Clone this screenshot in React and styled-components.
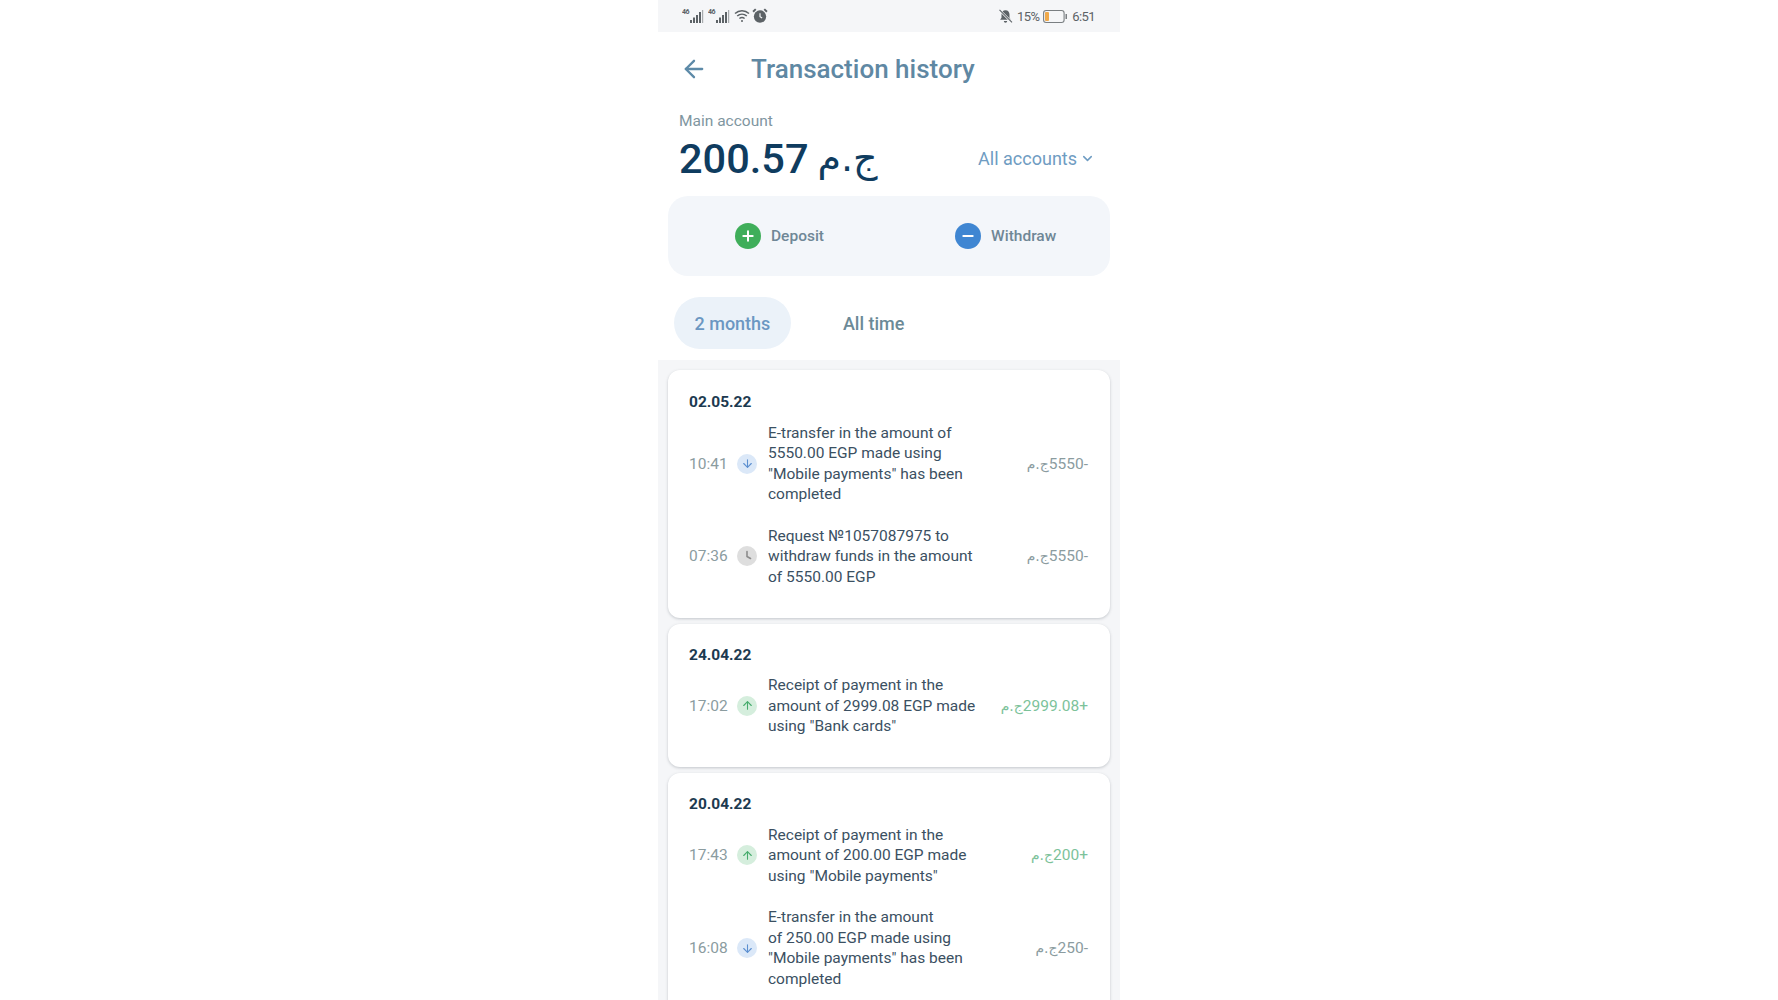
import { ArrowLeft, ArrowDown, ArrowUp, ChevronDown, Plus, Minus } from 'lucide-react'
import styled, { createGlobalStyle } from 'styled-components'

const GlobalStyle = createGlobalStyle`
  html, body {
    margin: 0;
    height: 1000px;
    overflow: hidden;
    background: #fff;
    font-family: Roboto, "Liberation Sans", "DejaVu Sans", sans-serif;
  }
`

const Phone = styled.div`
  width: 462px;
  height: 1000px;
  margin: 0 auto;
  overflow: hidden;
  background: #fff;
`

const StatusBar = styled.div`
  height: 32px;
  padding: 0 25px 0 24px;
  display: flex;
  align-items: center;
  justify-content: space-between;
  background: #f5f6f8;
  color: #5c6266;
  font-size: 13px;
  letter-spacing: -0.6px;
`

const StatusGroup = styled.div`
  display: flex;
  align-items: center;
  gap: ${(p) => p.$gap || 4}px;
`

const Header = styled.header`
  height: 74px;
  padding-left: 22px;
  display: flex;
  align-items: center;
  gap: 43px;
  color: #5d8aa8;
`

const Title = styled.h1`
  margin: 0;
  font-size: 26px;
  font-weight: 500;
  color: #5f88a3;
`

const Label = styled.div`
  margin-top: 5px;
  padding-left: 21px;
  font-size: 15.5px;
  line-height: 20px;
  color: #7f969f;
`

const BalanceRow = styled.div`
  height: 50px;
  margin-top: 2px;
  padding: 0 25px 0 21px;
  display: flex;
  align-items: center;
  justify-content: space-between;
`

const Balance = styled.div`
  display: flex;
  align-items: center;
  gap: 9px;
  font-size: 41.5px;
  font-weight: 500;
  color: #0f3c5f;
`

const Currency = styled.bdi`
  font-family: "DejaVu Sans", sans-serif;
  font-size: ${(p) => p.$size}px;
  font-weight: 400;
`

const AccountPicker = styled.div`
  display: flex;
  align-items: center;
  gap: 3px;
  font-size: 18px;
  color: #6f9cc2;
`

const Actions = styled.div`
  height: 80px;
  margin: 13px 10px 0;
  padding-left: 67px;
  display: flex;
  align-items: center;
  gap: 131px;
  border-radius: 20px;
  background: #f3f6fa;
`

const Action = styled.div`
  display: flex;
  align-items: center;
  gap: 10px;
  font-size: 15.5px;
  font-weight: 500;
  color: #6f8796;
`

const ActionIcon = styled.span`
  width: 26px;
  height: 26px;
  display: flex;
  align-items: center;
  justify-content: center;
  border-radius: 50%;
  color: #fff;
  background: ${(p) => p.$color};
`

const Tabs = styled.div`
  height: 52px;
  margin-top: 21px;
  padding-left: 16px;
  display: flex;
  align-items: center;
  gap: 52px;
`

const Tab = styled.div`
  height: 52px;
  padding: 0 ${(p) => (p.$active ? '20.5px' : '0')};
  display: flex;
  align-items: center;
  border-radius: 26px;
  font-size: 18px;
  font-weight: 500;
  color: ${(p) => (p.$active ? '#6b97c2' : '#6c8a97')};
  background: ${(p) => (p.$active ? '#ebf2f9' : 'transparent')};
`

const History = styled.section`
  margin-top: 11px;
  padding: 10px 10px 0;
  display: flex;
  flex-direction: column;
  gap: 6px;
  background: #f5f6f8;
  height: 640px;
`

const Card = styled.article`
  flex: none;
  padding: ${(p) => p.$top || 21}px 22px 30.5px 21px;
  border-radius: 12px;
  background: #fff;
  box-shadow: 0 1px 3px rgba(70, 80, 90, 0.28);
`

const DateLabel = styled.div`
  margin-bottom: 10.5px;
  font-size: 15.5px;
  line-height: 20px;
  font-weight: 700;
  color: #1c3a50;
`

const Rows = styled.div`
  display: flex;
  flex-direction: column;
  gap: 21px;
`

const Row = styled.div`
  display: grid;
  grid-template-columns: 48px 20px 1fr auto;
  align-items: center;
`

const Time = styled.span`
  font-size: 15.5px;
  color: #8b9c9f;
`

const StateIcon = styled.span`
  width: 20px;
  height: 20px;
  display: flex;
  align-items: center;
  justify-content: center;
  border-radius: 50%;
  color: ${(p) => p.$fg};
  background: ${(p) => p.$bg};
`

const Text = styled.p`
  margin: 0 0 0 11px;
  font-size: 15.5px;
  line-height: 20.5px;
  color: #3b5062;
  white-space: pre-line;
`

const Amount = styled.span`
  display: flex;
  align-items: center;
  font-size: 15.5px;
  color: ${(p) => (p.$in ? '#7cc29a' : '#8b9c9f')};
`

const icons = {
  down: { fg: '#5b8fd0', bg: '#dbe8f8', Icon: ArrowDown },
  up: { fg: '#45ab6c', bg: '#d5eedd', Icon: ArrowUp },
}

const days = [
  {
    date: '02.05.22',
    top: 22,
    rows: [
      { time: '10:41', kind: 'down', amount: '5550-', text: 'E-transfer in the amount of\n5550.00 EGP made using\n"Mobile payments" has been\ncompleted' },
      { time: '07:36', kind: 'clock', amount: '5550-', text: 'Request №1057087975 to\nwithdraw funds in the amount\nof 5550.00 EGP' },
    ],
  },
  {
    date: '24.04.22',
    rows: [
      { time: '17:02', kind: 'up', amount: '2999.08+', text: 'Receipt of payment in the\namount of 2999.08 EGP made\nusing "Bank cards"' },
    ],
  },
  {
    date: '20.04.22',
    rows: [
      { time: '17:43', kind: 'up', amount: '200+', text: 'Receipt of payment in the\namount of 200.00 EGP made\nusing "Mobile payments"' },
      { time: '16:08', kind: 'down', amount: '250-', text: 'E-transfer in the amount\nof 250.00 EGP made using\n"Mobile payments" has been\ncompleted' },
    ],
  },
]

function Signal() {
  return (
    <svg width="24" height="16" viewBox="0 0 24 16" fill="#5c6266">
      <text x="0" y="6" fontSize="7" fontWeight="700" fontFamily="Roboto, sans-serif">46</text>
      <rect x="8" y="12" width="2" height="3" />
      <rect x="11" y="9.5" width="2" height="5.5" />
      <rect x="14" y="7" width="2" height="8" />
      <rect x="17" y="4" width="2" height="11" />
      <rect x="20" y="2" width="1.2" height="13" opacity="0.5" />
    </svg>
  )
}

function Wifi() {
  return (
    <svg width="16" height="14" viewBox="0 0 16 14" fill="none" stroke="#5c6266" strokeWidth="1.5">
      <path d="M1 4.5C5 .8 11 .8 15 4.5" />
      <path d="M3.2 7C6 4.6 10 4.6 12.8 7" />
      <path d="M5.4 9.5C7 8.3 9 8.3 10.6 9.5" />
      <circle cx="8" cy="12" r="1" fill="#5c6266" stroke="none" />
    </svg>
  )
}

function Alarm() {
  return (
    <svg width="16" height="16" viewBox="0 0 15 15">
      <circle cx="7.5" cy="8" r="5.8" fill="#5c6266" />
      <path d="M1 3.5 3.5 1M14 3.5 11.5 1" stroke="#5c6266" strokeWidth="1.8" />
      <path d="M7.5 5v3.2l2 1.2" fill="none" stroke="#f5f6f8" strokeWidth="1.1" />
    </svg>
  )
}

function MutedBell() {
  return (
    <svg width="15" height="15" viewBox="0 0 15 15" fill="#5c6266">
      <path d="M7.5 1.2c2.6 0 4 2 4 4.4v3.2l1.4 2H2.1l1.4-2V5.6c0-2.4 1.4-4.4 4-4.4Z" />
      <path d="M5.8 12h3.4a1.7 1.7 0 0 1-3.4 0Z" />
      <path d="M1.5 1 14 13.5" stroke="#f5f6f8" strokeWidth="2.4" />
      <path d="M1.5 .8 14 13.3" stroke="#5c6266" strokeWidth="1.1" />
    </svg>
  )
}

function Battery() {
  return (
    <svg width="25" height="15" viewBox="0 0 25 15">
      <rect x="0.6" y="1.5" width="20.5" height="12" rx="2.5" fill="none" stroke="#7a7f82" strokeWidth="1.1" />
      <rect x="2" y="3" width="4" height="9" rx="1" fill="#f0a94a" />
      <rect x="22.5" y="5" width="1.5" height="5" fill="#7a7f82" />
    </svg>
  )
}

function ClockBadge() {
  return (
    <StateIcon $fg="#8c8c8c" $bg="#dedede">
      <svg width="14" height="14" viewBox="0 0 14 14" fill="none" stroke="currentColor" strokeWidth="1.6" strokeLinecap="round">
        <path d="M7 2.5V7.5L10.5 9.5" />
      </svg>
    </StateIcon>
  )
}

function RowIcon({ kind }) {
  if (kind === 'clock') return <ClockBadge />
  const { fg, bg, Icon } = icons[kind]
  return (
    <StateIcon $fg={fg} $bg={bg}>
      <Icon size={13} strokeWidth={2} />
    </StateIcon>
  )
}

export default function App() {
  return (
    <>
      <GlobalStyle />
      <Phone>
        <StatusBar>
          <StatusGroup $gap={2}>
            <Signal />
            <Signal />
            <Wifi />
            <Alarm />
          </StatusGroup>
          <StatusGroup>
            <MutedBell />
            <span>15%</span>
            <Battery />
            <span>6:51</span>
          </StatusGroup>
        </StatusBar>
        <Header>
          <ArrowLeft size={28} strokeWidth={2} />
          <Title>Transaction history</Title>
        </Header>
        <Label>Main account</Label>
        <BalanceRow>
          <Balance>
            <span>200.57</span>
            <Currency $size={38}>ج.م</Currency>
          </Balance>
          <AccountPicker>
            All accounts
            <ChevronDown size={15} strokeWidth={2.4} />
          </AccountPicker>
        </BalanceRow>
        <Actions>
          <Action>
            <ActionIcon $color="#3fae5a">
              <Plus size={16} strokeWidth={3} />
            </ActionIcon>
            Deposit
          </Action>
          <Action>
            <ActionIcon $color="#3f86d2">
              <Minus size={16} strokeWidth={3} />
            </ActionIcon>
            Withdraw
          </Action>
        </Actions>
        <Tabs>
          <Tab $active>2 months</Tab>
          <Tab>All time</Tab>
        </Tabs>
        <History>
          {days.map((day) => (
            <Card key={day.date} $top={day.top}>
              <DateLabel>{day.date}</DateLabel>
              <Rows>
                {day.rows.map((row) => (
                  <Row key={row.time}>
                    <Time>{row.time}</Time>
                    <RowIcon kind={row.kind} />
                    <Text>{row.text}</Text>
                    <Amount $in={row.kind === 'up'}>
                      <Currency $size={14}>ج.م</Currency>
                      <bdi>{row.amount}</bdi>
                    </Amount>
                  </Row>
                ))}
              </Rows>
            </Card>
          ))}
        </History>
      </Phone>
    </>
  )
}
